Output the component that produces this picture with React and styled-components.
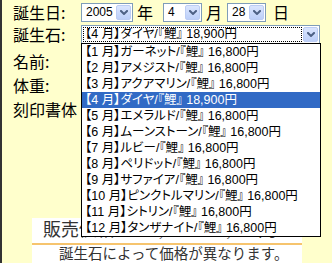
import React from 'react';
import styled, { createGlobalStyle } from 'styled-components';

const Global = createGlobalStyle`
  html, body { margin: 0; padding: 0; background: #ffffcc; }
  body { width: 332px; height: 263px; overflow: hidden; }
`;

const Page = styled.div`
  position: relative;
  box-sizing: border-box;
  width: 332px;
  height: 263px;
  border-left: 2px solid #333;
  background: #ffffcc;
  color: #000;
  font-family: "Noto Sans CJK JP", sans-serif;
  display: flex;
  flex-direction: column;
  overflow: hidden;
`;

const Form = styled.div`
  position: relative;
  display: flex;
  flex-direction: column;
  padding: 3px 0 0 11px;
`;

const Row = styled.div`
  display: flex;
  align-items: center;
  height: ${p => p.$h}px;
  margin-top: ${p => p.$mt || 0}px;
`;

const Label = styled.div`
  flex: 0 0 68px;
  font-size: 16px;
  line-height: 19px;
  white-space: nowrap;
`;

const Unit = styled.div`
  font-size: 16px;
  line-height: 19px;
  margin: 0 ${p => p.$after}px 0 ${p => p.$before}px;
`;

const SelectBox = styled.div`
  box-sizing: border-box;
  width: ${p => p.$w}px;
  height: 19px;
  padding: 1px;
  border: 1px solid #7f9db9;
  background: #fff;
  display: flex;
  align-items: stretch;
  gap: 1px;
`;

const SelectValue = styled.div`
  flex: 1;
  min-width: 0;
  box-sizing: border-box;
  padding-left: ${p => (p.$focus ? 1 : 2)}px;
  border: 1px dotted ${p => (p.$focus ? '#000' : 'transparent')};
  font-family: "Liberation Sans", "Noto Sans CJK JP", sans-serif;
  font-size: ${p => (p.$focus ? 12.5 : 12)}px;
  font-feature-settings: "palt";
  line-height: 13px;
  white-space: nowrap;
  overflow: hidden;
  display: flex;
  align-items: center;
`;

const ArrowBtn = styled.div`
  flex: 0 0 15px;
  box-sizing: border-box;
  border: 1px solid #bccdf4;
  border-radius: 2px;
  background: linear-gradient(#dbe6fe, #bccff9);
  display: flex;
  align-items: center;
  justify-content: center;
`;

const Arrow = () => (
  <ArrowBtn>
    <svg width="8" height="5" viewBox="0 0 8 5">
      <path d="M1 1 L4 4 L7 1" fill="none" stroke="#4d6185" strokeWidth="2" strokeLinecap="square" />
    </svg>
  </ArrowBtn>
);

const Select = ({ w, value, focus }) => (
  <SelectBox $w={w}>
    <SelectValue $focus={focus}>{value}</SelectValue>
    <Arrow />
  </SelectBox>
);

const TextInput = styled.div`
  box-sizing: border-box;
  width: ${p => p.$w}px;
  height: 20px;
  border: 1px solid #7f9db9;
  background: #fff;
`;

const List = styled.ul`
  position: absolute;
  left: 79px;
  top: 43px;
  width: 240px;
  box-sizing: border-box;
  margin: 0;
  padding: 0;
  list-style: none;
  border: 1px solid #000;
  background: #fff;
  z-index: 2;
`;

const Item = styled.li`
  height: 16px;
  line-height: 16px;
  padding-left: 3px;
  font-family: "Liberation Sans", "Noto Sans CJK JP", sans-serif;
  font-size: 12.5px;
  font-feature-settings: "palt";
  white-space: nowrap;
  background: ${p => (p.$active ? '#316ac5' : '#fff')};
  color: ${p => (p.$active ? '#fff' : '#000')};
`;

const PriceBox = styled.div`
  margin: auto 0 0 30px;
  width: 270px;
  height: 45px;
  background: #fff;
  display: flex;
  flex-direction: column;
`;

const PriceTitle = styled.div`
  height: 25px;
  line-height: 25px;
  padding-left: 11px;
  font-family: "Liberation Serif", "Noto Sans CJK JP", serif;
  font-size: 18px;
  word-spacing: 6px;
  color: #333;
  white-space: nowrap;
`;

const Rule = styled.div`
  height: 2px;
  background: #f6c46e;
`;

const Note = styled.div`
  padding: 1px 0 0 27px;
  font-family: "Liberation Serif", "Noto Sans CJK JP", serif;
  font-size: 14.5px;
  line-height: 17px;
  color: #333;
  white-space: nowrap;
`;

const stones = [
  ['1', 'ガーネット', '16,800'],
  ['2', 'アメジスト', '16,800'],
  ['3', 'アクアマリン', '16,800'],
  ['4', 'ダイヤ', '18,900'],
  ['5', 'エメラルド', '16,800'],
  ['6', 'ムーンストーン', '16,800'],
  ['7', 'ルビー', '16,800'],
  ['8', 'ペリドット', '16,800'],
  ['9', 'サファイア', '16,800'],
  ['10', 'ピンクトルマリン', '16,800'],
  ['11', 'シトリン', '16,800'],
  ['12', 'タンザナイト', '16,800'],
];

const label = ([m, n, p]) => `【${m} 月】${n}/『鯉』 ${p}円`;

export default function App() {
  return (
    <>
      <Global />
      <Page>
        <Form>
          <Row $h={19}>
            <Label>誕生日:</Label>
            <Select w={52} value="2005" />
            <Unit $before={4} $after={10}>年</Unit>
            <Select w={39} value="4" />
            <Unit $before={4} $after={5}>月</Unit>
            <Select w={39} value="28" />
            <Unit $before={7} $after={0}>日</Unit>
          </Row>
          <Row $h={19} $mt={3}>
            <Label>誕生石:</Label>
            <Select w={239} value={label(stones[3])} focus />
          </Row>
          <Row $h={24} $mt={5}>
            <Label>名前:</Label>
            <TextInput $w={150} />
          </Row>
          <Row $h={24}>
            <Label>体重:</Label>
            <TextInput $w={60} />
          </Row>
          <Row $h={24}>
            <Label>刻印書体</Label>
            <TextInput $w={120} />
          </Row>
          <List>
            {stones.map(s => (
              <Item key={s[0]} $active={s[0] === '4'}>{label(s)}</Item>
            ))}
          </List>
        </Form>
        <PriceBox>
          <PriceTitle>販売価格 : 16,800～18,900円</PriceTitle>
          <Rule />
          <Note>誕生石によって価格が異なります。</Note>
        </PriceBox>
      </Page>
    </>
  );
}
